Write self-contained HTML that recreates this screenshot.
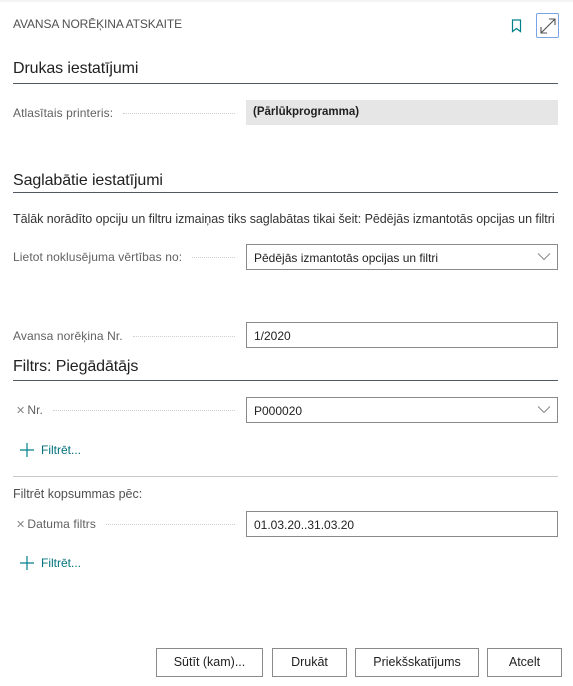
<!DOCTYPE html>
<html><head><meta charset="utf-8"><style>
*{margin:0;padding:0;box-sizing:border-box}
body{width:573px;height:686px;background:#fff;position:relative;overflow:hidden;font-family:"Liberation Sans",sans-serif;color:#212121}
.a{position:absolute;white-space:nowrap}
.h{font-size:16px;color:#212121;letter-spacing:-0.1px}
.ln{position:absolute;left:13px;width:545px;height:1px;background:#505a64}
.lbl{position:absolute;left:13px;font-size:12px;color:#616161;letter-spacing:0.1px;width:230px;display:flex;align-items:baseline;white-space:nowrap}
.lbl .d{flex:1;border-bottom:1px dotted #d0d0d0;margin:0 8px 0 10px;transform:translateY(-3px)}
.box{position:absolute;left:246px;width:312px;height:26px;border:1px solid #8a8a8a;font-size:12px;padding:6px 0 0 7px;color:#212121}
.chev{position:absolute;right:6px;top:7px}
.btn{position:absolute;top:648px;height:29px;border:1px solid #8a8a8a;font-size:12.5px;text-align:center;line-height:27px;color:#212121;background:#fff}
.f{position:absolute;left:20px;font-size:12px;color:#00707a;display:flex;align-items:center;gap:7px}
.x{color:#888;font-size:11px;margin-right:2px}
</style></head><body>
<div style="position:absolute;left:0;top:0;width:573px;height:2px;background:#f4f4f4"></div>
<div class="a" style="left:13px;top:17px;font-size:12px;color:#505050;letter-spacing:-0.1px">AVANSA NORĒĶINA ATSKAITE</div>
<svg class="a" style="left:511px;top:19px" width="11" height="14" viewBox="0 0 11 14"><path d="M1.5 1 H9.5 V12.5 L5.5 9.5 L1.5 12.5 Z" fill="none" stroke="#00808a" stroke-width="1.2"/></svg>
<div class="a" style="left:536px;top:13px;width:23px;height:25px;border:1.5px solid #7aa4e6;border-radius:2px"></div>
<svg class="a" style="left:539px;top:17px" width="18" height="18" viewBox="0 0 18 18"><path d="M2 16 L16 2 M10 2 H16 V8 M2 10 V16 H8" fill="none" stroke="#505050" stroke-width="1.1"/></svg>

<div class="a h" style="left:13px;top:60px">Drukas iestatījumi</div>
<div class="ln" style="top:83px"></div>
<div class="lbl" style="top:106px">Atlasītais printeris:<span class="d"></span></div>
<div class="a" style="left:246px;top:100px;width:312px;height:25px;background:#e6e6e6;font-size:11.5px;font-weight:bold;padding:6px 0 0 7px;color:#212121">(Pārlūkprogramma)</div>

<div class="a h" style="left:13px;top:172px">Saglabātie iestatījumi</div>
<div class="ln" style="top:192px"></div>
<div class="a" style="left:13px;top:212px;font-size:12.5px;color:#333;letter-spacing:-0.05px">Tālāk norādīto opciju un filtru izmaiņas tiks saglabātas tikai šeit: Pēdējās izmantotās opcijas un filtri</div>
<div class="lbl" style="top:250px">Lietot noklusējuma vērtības no:<span class="d"></span></div>
<div class="box" style="top:244px">Pēdējās izmantotās opcijas un filtri<svg class="chev" width="14" height="9" viewBox="0 0 14 9"><path d="M1 1.5 L7 7.5 L13 1.5" fill="none" stroke="#888" stroke-width="1"/></svg></div>

<div class="lbl" style="top:329px">Avansa norēķina Nr.<span class="d"></span></div>
<div class="box" style="top:322px">1/2020</div>

<div class="a h" style="left:13px;top:358px">Filtrs: Piegādātājs</div>
<div class="ln" style="top:380px"></div>
<div class="lbl" style="top:403px;left:16px;width:227px"><span class="x">✕</span>Nr.<span class="d"></span></div>
<div class="box" style="top:397px">P000020<svg class="chev" width="14" height="9" viewBox="0 0 14 9"><path d="M1 1.5 L7 7.5 L13 1.5" fill="none" stroke="#888" stroke-width="1"/></svg></div>
<div class="f" style="top:443px"><svg width="14" height="14" viewBox="0 0 14 14"><path d="M7 0 V14 M0 7 H14" stroke="#00808a" stroke-width="1.2"/></svg>Filtrēt...</div>

<div class="a" style="left:13px;top:476px;width:545px;height:1px;background:#c8c8c8"></div>
<div class="a" style="left:13px;top:487px;font-size:12.5px;color:#505050">Filtrēt kopsummas pēc:</div>
<div class="lbl" style="top:517px;left:16px;width:227px"><span class="x">✕</span>Datuma filtrs<span class="d"></span></div>
<div class="box" style="top:511px">01.03.20..31.03.20</div>
<div class="f" style="top:556px"><svg width="14" height="14" viewBox="0 0 14 14"><path d="M7 0 V14 M0 7 H14" stroke="#00808a" stroke-width="1.2"/></svg>Filtrēt...</div>

<div class="btn" style="left:156px;width:107px">Sūtīt (kam)...</div>
<div class="btn" style="left:272px;width:75px">Drukāt</div>
<div class="btn" style="left:355px;width:124px">Priekšskatījums</div>
<div class="btn" style="left:487px;width:75px">Atcelt</div>
</body></html>
